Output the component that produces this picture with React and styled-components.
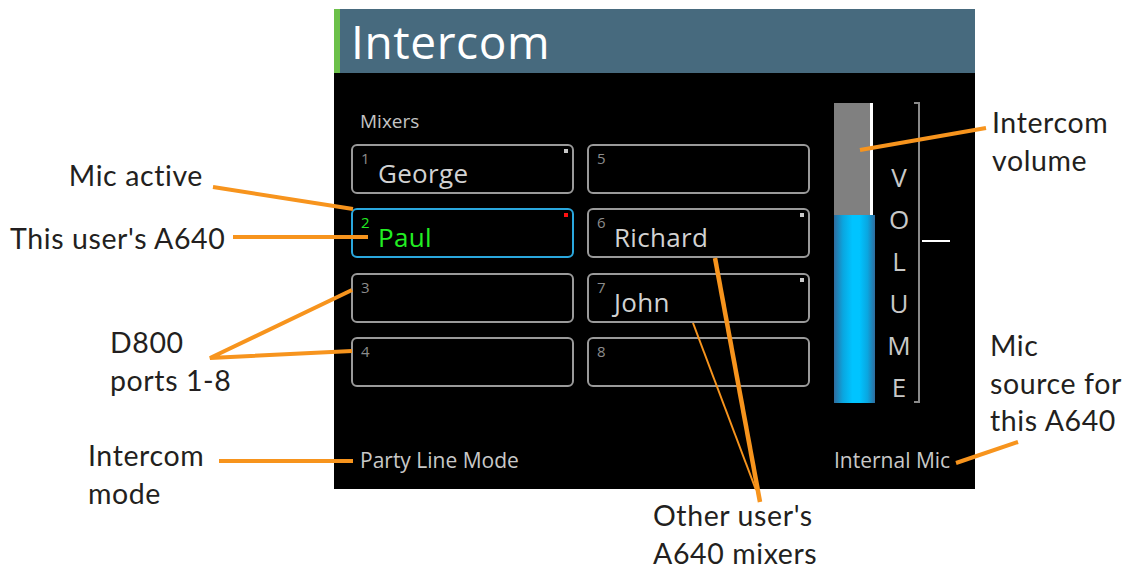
import React from "react";
import styled, { createGlobalStyle } from "styled-components";

const Global = createGlobalStyle`
  html, body { margin: 0; padding: 0; background: #ffffff; }
  body { font-family: "Open Sans", "DejaVu Sans", sans-serif; }
`;

const Stage = styled.div`
  position: relative;
  width: 1125px;
  height: 571px;
  overflow: hidden;
  background: #ffffff;
  padding: 9px 0 0 334px;
  box-sizing: border-box;
`;

const Screen = styled.section`
  width: 641px;
  display: flex;
  flex-direction: column;
  font-family: "Open Sans", sans-serif;
`;

const Header = styled.header`
  height: 64px;
  background: #476a7e;
  border-left: 6px solid #6cc04a;
  box-sizing: border-box;
  padding-left: 11px;
  display: flex;
  align-items: center;
`;

const Title = styled.h1`
  margin: 0;
  font-weight: 400;
  font-size: 46px;
  letter-spacing: 0.6px;
  line-height: 64px;
  color: #ffffff;
`;

const Body = styled.div`
  height: 416px;
  background: #000000;
  box-sizing: border-box;
  padding: 0 0 15px 17px;
  display: grid;
  grid-template-columns: 483px 1fr;
  grid-template-rows: 1fr auto;
`;

const MixerPanel = styled.div`
  padding-top: 34.7px;
  display: flex;
  flex-direction: column;
`;

const SectionLabel = styled.div`
  font-size: 19px;
  color: #c4c4c4;
  padding-left: 9px;
  margin-bottom: 10.4px;
`;

const MixerGrid = styled.div`
  display: grid;
  grid-template-columns: 223px 223px;
  grid-template-rows: repeat(4, 50px);
  grid-auto-flow: column;
  column-gap: 13px;
  row-gap: 14.33px;
`;

const MixerBox = styled.div`
  position: relative;
  box-sizing: border-box;
  border: 2px solid ${(p) => (p.$self ? "#2aa7dd" : "#9a9a9a")};
  border-radius: 6px;
  padding: 5px 0 0 8px;
  display: flex;
  align-items: flex-start;
`;

const PortNum = styled.span`
  width: 17px;
  font-size: 15px;
  line-height: 15px;
  color: ${(p) => (p.$self ? "#22ee22" : "#8c8c8c")};
`;

const MixerName = styled.span`
  margin-top: 9px;
  font-size: 26px;
  line-height: 26px;
  letter-spacing: 0.3px;
  color: ${(p) => (p.$self ? "#22ee22" : "#d2d2d2")};
`;

const Indicator = styled.span`
  position: absolute;
  top: 3px;
  right: 4px;
  width: 4px;
  height: 4px;
  background: ${(p) => (p.$red ? "#ff1010" : "#c8c8c8")};
`;

const VolumePanel = styled.div`
  padding-top: 30px;
  display: flex;
  align-items: flex-start;
`;

const Bar = styled.div`
  width: 41px;
  height: 300px;
  display: flex;
  flex-direction: column;
`;

const BarEmpty = styled.div`
  width: 39px;
  height: 112px;
  box-sizing: border-box;
  background: #808080;
  border-right: 3px solid #ffffff;
`;

const BarFill = styled.div`
  flex: 1;
  background: linear-gradient(
    to right,
    #2f6c9e 0%,
    #0aa6e0 22%,
    #00c4ff 45%,
    #00c4ff 62%,
    #0aa6e0 82%,
    #2f6c9e 100%
  );
`;

const VolumeLetters = styled.div`
  width: 39px;
  box-sizing: border-box;
  padding: 52.5px 0 0 9px;
  display: flex;
  flex-direction: column;
  align-items: center;
  font-size: 26px;
  line-height: 42px;
  color: #c8c8c8;
`;

const Bracket = styled.div`
  width: 6px;
  height: 301px;
  margin-top: -1px;
  box-sizing: border-box;
  border: 2px solid #8a8a8a;
  border-left: none;
`;

const LevelTick = styled.div`
  width: 28px;
  height: 2px;
  margin: 137px 0 0 2px;
  background: #ffffff;
`;

const FooterText = styled.div`
  font-size: 21px;
  color: #c8c8c8;
  padding-left: ${(p) => p.$indent || 0}px;
`;

const Callout = styled.div`
  position: absolute;
  top: ${(p) => p.$top}px;
  ${(p) => (p.$right != null ? `right: ${p.$right}px; text-align: right;` : `left: ${p.$left}px;`)}
  font-family: "Lato", "Open Sans", sans-serif;
  font-size: 28.5px;
  letter-spacing: 0.6px;
  line-height: 37.5px;
  color: #231f20;
  white-space: nowrap;
  z-index: 2;
`;

const Leaders = styled.svg`
  position: absolute;
  left: 0;
  top: 0;
  pointer-events: none;
  z-index: 3;
`;

const mixers = [
  { n: 1, name: "George", ind: "gray" },
  { n: 2, name: "Paul", ind: "red", self: true },
  { n: 3 },
  { n: 4 },
  { n: 5 },
  { n: 6, name: "Richard", ind: "gray" },
  { n: 7, name: "John", ind: "gray" },
  { n: 8 },
];

const ORANGE = "#f7941d";

export default function App() {
  return (
    <>
      <Global />
      <Stage>
        <Screen>
          <Header>
            <Title>Intercom</Title>
          </Header>
          <Body>
            <MixerPanel>
              <SectionLabel>Mixers</SectionLabel>
              <MixerGrid>
                {mixers.map((m) => (
                  <MixerBox key={m.n} $self={m.self}>
                    <PortNum $self={m.self}>{m.n}</PortNum>
                    {m.name && <MixerName $self={m.self}>{m.name}</MixerName>}
                    {m.ind && <Indicator $red={m.ind === "red"} />}
                  </MixerBox>
                ))}
              </MixerGrid>
            </MixerPanel>
            <VolumePanel>
              <Bar>
                <BarEmpty />
                <BarFill />
              </Bar>
              <VolumeLetters>
                {"VOLUME".split("").map((c, i) => (
                  <span key={i}>{c}</span>
                ))}
              </VolumeLetters>
              <Bracket />
              <LevelTick />
            </VolumePanel>
            <FooterText $indent={9}>Party Line Mode</FooterText>
            <FooterText>Internal Mic</FooterText>
          </Body>
        </Screen>

        <Callout $right={922} $top={157}>Mic active</Callout>
        <Callout $left={10} $top={220}>This user's A640</Callout>
        <Callout $left={110} $top={324}>
          D800
          <br />
          ports 1-8
        </Callout>
        <Callout $left={88} $top={437}>
          Intercom
          <br />
          mode
        </Callout>
        <Callout $left={992} $top={104}>
          Intercom
          <br />
          volume
        </Callout>
        <Callout $left={990} $top={327}>
          Mic
          <br />
          source for
          <br />
          this A640
        </Callout>
        <Callout $left={653} $top={497}>
          Other user's
          <br />
          A640 mixers
        </Callout>

        <Leaders width="1125" height="571" viewBox="0 0 1125 571">
          <g stroke={ORANGE} strokeWidth="4" fill="none">
            <line x1="213" y1="187" x2="353" y2="209" />
            <line x1="233" y1="237" x2="368" y2="237" />
            <polyline points="352,290 210,358 352,351" strokeLinejoin="miter" />
            <line x1="219" y1="461" x2="353" y2="461" />
            <line x1="860" y1="150" x2="986" y2="128" />
            <line x1="956" y1="463" x2="1018" y2="442" />
            <line x1="715" y1="258" x2="760" y2="502" strokeWidth="4.5" />
            <line x1="693" y1="323" x2="756" y2="490" strokeWidth="2" />
          </g>
        </Leaders>
      </Stage>
    </>
  );
}
